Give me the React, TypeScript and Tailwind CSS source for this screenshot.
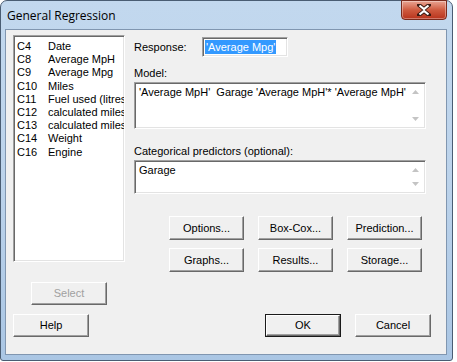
import React from 'react';

const font = { fontFamily: '"Liberation Sans", Arial, sans-serif' };

const variables = [
  ['C4', 'Date'],
  ['C8', 'Average MpH'],
  ['C9', 'Average Mpg'],
  ['C10', 'Miles'],
  ['C11', 'Fuel used (litres)'],
  ['C12', 'calculated miles/gallon'],
  ['C13', 'calculated miles/litre'],
  ['C14', 'Weight'],
  ['C16', 'Engine'],
];

function Button({
  label,
  disabled,
  primary,
  className = '',
}: {
  label: string;
  disabled?: boolean;
  primary?: boolean;
  className?: string;
}) {
  const inner = (
    <div
      className={
        'flex items-center justify-center h-full w-full border border-t-white border-l-white border-b-[#696969] border-r-[#696969] bg-[#f0f0f0] shadow-[inset_-1px_-1px_0_#a0a0a0] text-[11px] ' +
        (disabled ? 'text-[#a0a0a0]' : 'text-black')
      }
    >
      {label}
    </div>
  );
  if (primary) {
    return <div className={'border border-[#1a1a1a] ' + className}>{inner}</div>;
  }
  return <div className={className}>{inner}</div>;
}

function Sunken({ className = '', children }: { className?: string; children?: React.ReactNode }) {
  return (
    <div
      className={
        'relative bg-white border border-t-[#a0a0a0] border-l-[#a0a0a0] border-b-white border-r-white shadow-[inset_1px_1px_0_#696969,inset_-1px_-1px_0_#e3e3e3] ' +
        className
      }
    >
      {children}
    </div>
  );
}

function ScrollArrows() {
  return (
    <div className="absolute right-[2px] top-[2px] bottom-[2px] w-[16px] flex flex-col justify-between items-center py-[5px]">
      <svg width="7" height="4" viewBox="0 0 7 4">
        <path d="M0 4 L3.5 0 L7 4 Z" fill="#c4c4c4" />
      </svg>
      <svg width="7" height="4" viewBox="0 0 7 4">
        <path d="M0 0 L3.5 4 L7 0 Z" fill="#c4c4c4" />
      </svg>
    </div>
  );
}

export default function App() {
  return (
    <div className="w-[457px] h-[362px] bg-white overflow-hidden" style={font}>
      <div className="w-[453px] h-[361px] rounded-t-[7px] rounded-b-[3px] border border-[#4a5d73] bg-gradient-to-b from-[#c2d8ee] via-[#bcd3eb] to-[#aac6e4] flex flex-col">
        <div className="h-[28px] flex items-start">
          <div
            className="pl-[6px] pt-[6px] text-[12px] text-black flex-1"
            style={{ fontFamily: '"Open Sans", "Noto Sans", sans-serif' }}
          >
            General Regression
          </div>
          <div className="mr-[5px] mt-[-1px] w-[46px] h-[20px] rounded-b-[4px] border border-[#7a2a1c] bg-gradient-to-b from-[#e8a493] via-[#cf5a3f] to-[#b8321b] flex items-center justify-center shadow-[inset_0_0_0_1px_rgba(255,255,255,0.35)]">
            <svg width="14" height="12" viewBox="0 0 14 12">
              <path
                d="M2 1 L7 5 L12 1 M2 11 L7 7 L12 11"
                stroke="#3a1a12"
                strokeWidth="4"
                fill="none"
                strokeLinecap="square"
              />
              <path
                d="M2.5 1.5 L7 5.2 L11.5 1.5 M2.5 10.5 L7 6.8 L11.5 10.5"
                stroke="#ffffff"
                strokeWidth="2.2"
                fill="none"
              />
            </svg>
          </div>
        </div>

        <div className="ml-[4px] w-[442px] h-[326px] border border-[#8096b0] bg-[#f0f0f0] pt-[5px] pl-[7px] pr-[15px] flex flex-col">
          <div className="flex items-start">
            <Sunken className="w-[112px] h-[227px] overflow-hidden">
              <div className="pt-[4px] pl-[3px] text-[11px] leading-[13.2px] text-black whitespace-nowrap">
                {variables.map(([c, n]) => (
                  <div key={c} className="flex">
                    <span className="inline-block w-[31px] shrink-0">{c}</span>
                    <span>{n}</span>
                  </div>
                ))}
              </div>
            </Sunken>

            <div className="ml-[9px] w-[292px] flex flex-col">
              <div className="flex items-center mt-[2px] h-[20px]">
                <div className="w-[68px] text-[11px] text-black">Response:</div>
                <Sunken className="w-[86px] h-[20px] flex items-center pl-[2px]">
                  <span className="bg-[#3399ff] text-white text-[11px] leading-[14px] px-[1px]">
                    'Average Mpg'
                  </span>
                </Sunken>
              </div>

              <div className="mt-[10px] text-[11px] leading-[13px] text-black">Model:</div>
              <Sunken className="mt-[2px] h-[47px]">
                <div className="pt-[3px] pl-[4px] text-[11px] leading-[13px] text-black whitespace-pre">
                  'Average MpH'  Garage 'Average MpH'* 'Average MpH'
                </div>
                <ScrollArrows />
              </Sunken>

              <div className="mt-[16px] text-[11px] leading-[13px] text-black">
                Categorical predictors (optional):
              </div>
              <Sunken className="mt-[2px] h-[34px]">
                <div className="pt-[3px] pl-[4px] text-[11px] leading-[13px] text-black">Garage</div>
                <ScrollArrows />
              </Sunken>

              <div className="mt-[22px] pl-[35px] grid grid-cols-[75px_75px_75px] gap-x-[14px] gap-y-[8px]">
                <Button label="Options..." className="h-[24px]" />
                <Button label="Box-Cox..." className="h-[24px]" />
                <Button label="Prediction..." className="h-[24px]" />
                <Button label="Graphs..." className="h-[24px]" />
                <Button label="Results..." className="h-[24px]" />
                <Button label="Storage..." className="h-[24px]" />
              </div>
            </div>
          </div>

          <Button label="Select" disabled className="mt-[10px] ml-[18px] w-[76px] h-[23px]" />

          <div className="mt-[9px] flex items-center">
            <Button label="Help" className="w-[76px] h-[23px]" />
            <div className="flex-1" />
            <Button label="OK" primary className="w-[76px] h-[23px]" />
            <Button label="Cancel" className="ml-[14px] w-[76px] h-[23px]" />
          </div>
        </div>
      </div>
    </div>
  );
}
